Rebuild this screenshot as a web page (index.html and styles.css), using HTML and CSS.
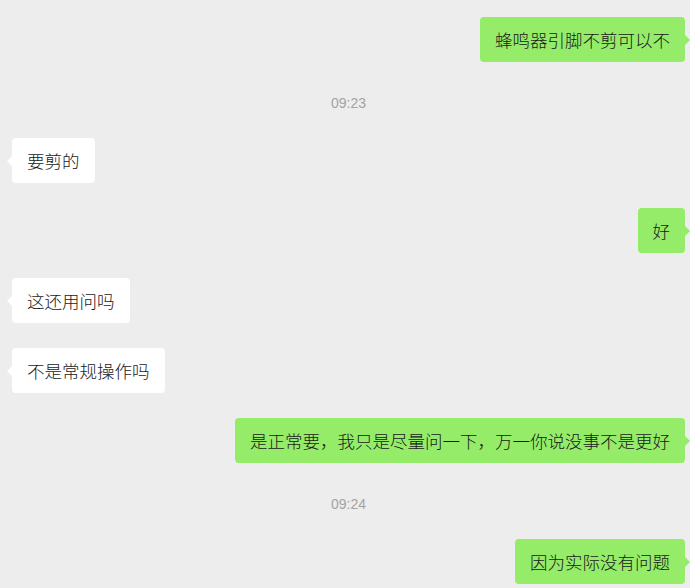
FILE: index.html
```html
<!DOCTYPE html>
<html lang="zh-CN">
<head>
    <meta charset="UTF-8">
    <meta name="viewport" content="width=device-width, initial-scale=1.0">
    <title>聊天</title>
    <link rel="stylesheet" href="styles.css">
</head>
<body>
    <main class="chat">
        <div class="msg mine"><p class="bubble">蜂鸣器引脚不剪可以不</p></div>

        <div class="time">09:23</div>

        <div class="msg theirs"><p class="bubble">要剪的</p></div>
        <div class="msg mine"><p class="bubble">好</p></div>
        <div class="msg theirs"><p class="bubble">这还用问吗</p></div>
        <div class="msg theirs"><p class="bubble">不是常规操作吗</p></div>
        <div class="msg mine"><p class="bubble">是正常要，我只是尽量问一下，万一你说没事不是更好</p></div>

        <div class="time">09:24</div>

        <div class="msg mine"><p class="bubble">因为实际没有问题</p></div>
    </main>
</body>
</html>
```

FILE: styles.css
```css
html, body {
    margin: 0;
    padding: 0;
}

body {
    background-color: #ededed;
    font-family: "Noto Sans CJK SC", "Noto Sans", sans-serif;
    color: #191919;
    overflow: hidden;
}

.chat {
    display: flex;
    flex-direction: column;
    gap: 25px;
    padding: 17px 5px 0 12px;
}

.msg {
    display: flex;
}

.mine {
    justify-content: flex-end;
}

.theirs {
    justify-content: flex-start;
}

.bubble {
    position: relative;
    margin: 0;
    padding: 10px 15px;
    font-size: 17.5px;
    font-weight: 300;
    line-height: 25px;
    border-radius: 4px;
    white-space: nowrap;
}

.mine .bubble {
    background-color: #95ec69;
}

.theirs .bubble {
    background-color: #fff;
}

/* little pointer on the side of each bubble */
.bubble::before {
    content: "";
    position: absolute;
    top: 50%;
    margin-top: -6px;
    border: 6px solid transparent;
}

.mine .bubble::before {
    right: -11px;
    border-left-color: #95ec69;
}

.theirs .bubble::before {
    left: -11px;
    border-right-color: #fff;
}

.time {
    text-align: center;
    font-family: "Liberation Sans", Arial, sans-serif;
    font-size: 14px;
    line-height: 20px;
    color: #a3a3a3;
    margin: 6px 0 0;
}
```
